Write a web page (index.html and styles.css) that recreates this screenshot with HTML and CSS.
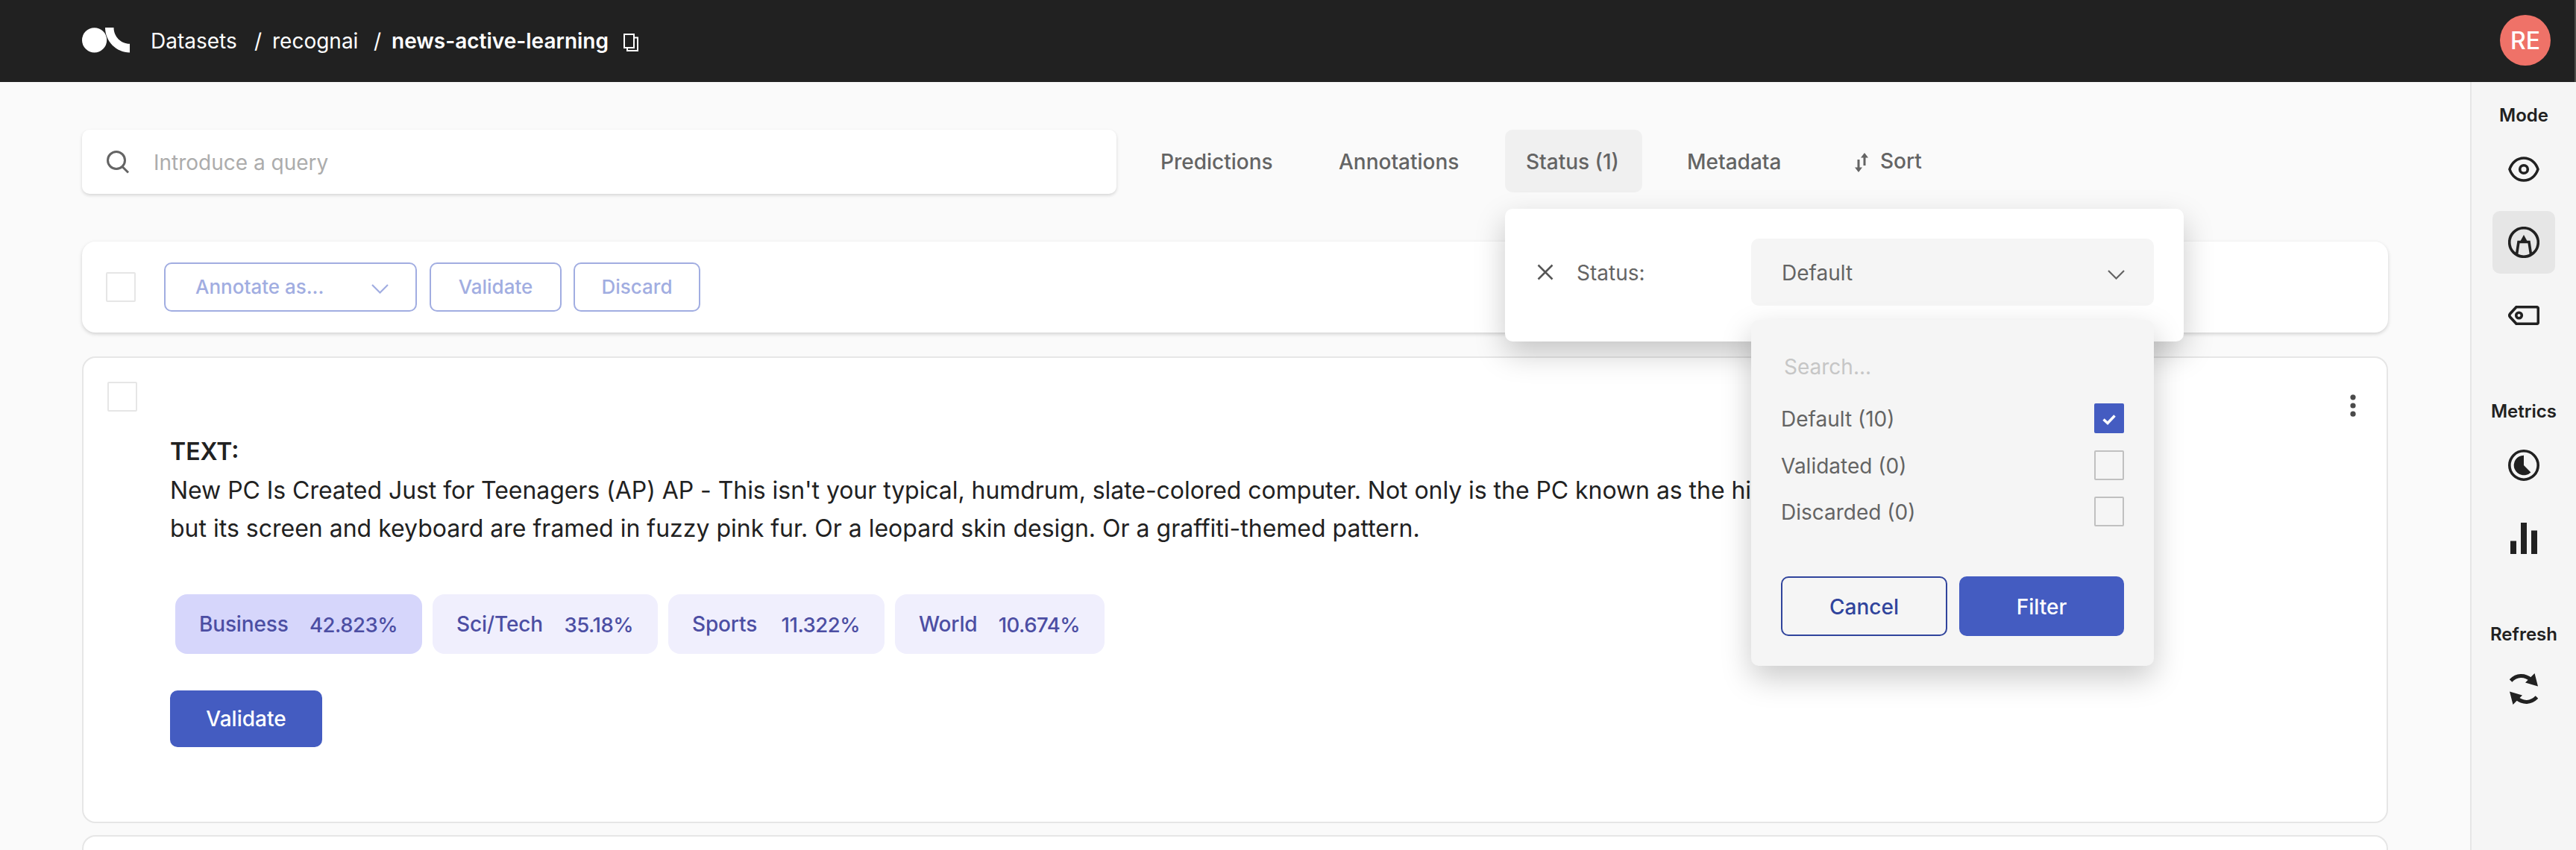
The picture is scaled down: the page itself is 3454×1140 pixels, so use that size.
FILE: index.html
```html
<!DOCTYPE html>
<html lang="en">
<head>
<meta charset="utf-8">
<title>news-active-learning</title>
<link rel="stylesheet" href="styles.css">
</head>
<body>
<header class="topbar">
  <svg class="logo" width="64" height="34" viewBox="0 0 64 34"><circle cx="16.600" cy="16.800" r="16.600"/><path d="M31 0H42.500C42.500 12 52 21.800 64 21.800V33.500C46 33.500 31 18.500 31 0Z"/></svg>
  <nav class="crumbs">
    <span class="crumb crumb-root">Datasets</span><span class="slash slash-one">/</span>
    <span class="crumb crumb-owner">recognai</span><span class="slash slash-two">/</span>
    <span class="crumb crumb-name">news-active-learning</span>
  </nav>
  <svg class="copy" width="20" height="24" viewBox="0 0 20 24"><path d="M1 1H14V19H1ZM14 5.500H19V23H5V19"/></svg>
  <div class="avatar">RE</div>
</header>
<div class="body">
  <main class="main">
    <div class="filters">
      <div class="search">
        <svg width="31" height="31" viewBox="0 0 31 31"><circle cx="13" cy="13" r="11.500"/><path d="M21 21.500L29 29.500"/></svg>
        <span>Introduce a query</span>
      </div>
      <div class="tabs">
        <span class="tab tab-predictions">Predictions</span>
        <span class="tab tab-annotations">Annotations</span>
        <div class="tab tab-status">Status (1)
          <section class="popup">
            <svg class="close" width="22" height="22" viewBox="0 0 22 22"><path d="M1.500 1.500L20.500 20.500M20.500 1.500L1.500 20.500"/></svg>
            <span class="popup-label">Status:</span>
            <div class="picker">
              <span>Default</span>
              <svg class="chevron" width="23" height="13" viewBox="0 0 23 13"><path d="M1 1L11.500 11.500L22 1"/></svg>
              <div class="dropdown">
                <div class="dd-search">Search...</div>
                <div class="option"><span>Default (10)</span><i class="box checked"><svg width="18" height="14" viewBox="0 0 18 14"><path d="M1.500 6.500L7 11.500L16.500 1.500"/></svg></i></div>
                <div class="option"><span>Validated (0)</span><i class="box"></i></div>
                <div class="option"><span>Discarded (0)</span><i class="box"></i></div>
                <div class="dd-actions"><button class="btn cancel">Cancel</button><button class="btn filter">Filter</button></div>
              </div>
            </div>
          </section>
        </div>
        <span class="tab tab-metadata">Metadata</span>
        <span class="tab tab-sort"><svg width="18" height="26" viewBox="0 0 18 26"><path class="line" d="M5 9V21M13 17V5"/><path d="M0 19.500H10L5 26ZM8 6.500H18L13 0Z"/></svg>Sort</span>
      </div>
    </div>
    <div class="bulk">
      <i class="check"></i>
      <button class="outline annotate"><span>Annotate as...</span><svg class="chevron" width="23" height="13" viewBox="0 0 23 13"><path d="M1 1L11.500 11.500L22 1"/></svg></button>
      <button class="outline bulk-validate">Validate</button>
      <button class="outline bulk-discard">Discard</button>
    </div>
    <article class="record">
      <i class="check"></i>
      <div class="record-body">
        <h2>TEXT:</h2>
        <p><span class="line-one">New PC Is Created Just for Teenagers (AP) AP - This isn't your typical, humdrum, slate-colored computer. Not only is the PC known as the hip-e,</span><br><span class="line-two">but its screen and keyboard are framed in fuzzy pink fur. Or a leopard skin design. Or a graffiti-themed pattern.</span></p>
        <div class="labels">
          <div class="label top w1"><span>Business</span><b>42.823%</b></div>
          <div class="label w2"><span>Sci/Tech</span><b>35.18%</b></div>
          <div class="label w3"><span>Sports</span><b>11.322%</b></div>
          <div class="label w4"><span>World</span><b>10.674%</b></div>
        </div>
        <button class="btn validate">Validate</button>
      </div>
      <svg class="more" width="8" height="30" viewBox="0 0 8 30"><circle cx="4" cy="3.800" r="3.600"/><circle cx="4" cy="15" r="3.600"/><circle cx="4" cy="26.200" r="3.600"/></svg>
    </article>
    <article class="record next"></article>
  </main>
  <aside class="side">
    <h3>Mode</h3>
    <div class="tool"><svg width="42" height="34" viewBox="0 0 42 34"><path d="M2 17C5 8 12 2 21 2S37 8 40 17C37 26 30 32 21 32S5 26 2 17Z"/><circle cx="21" cy="17" r="5.300"/></svg></div>
    <div class="tool active"><svg width="42" height="42" viewBox="0 0 42 42"><circle cx="21" cy="21" r="19.300"/><path d="M11.500 37L14 20.500H28L30.500 37"/><path class="solid" d="M21 11L26.500 21H15.500Z"/></svg></div>
    <div class="tool"><svg width="42" height="26" viewBox="0 0 42 26"><path d="M11 1.700H38Q40.300 1.700 40.300 4V22Q40.300 24.300 38 24.300H11L2.500 15Q1 13 2.500 11Z"/><circle cx="14.500" cy="13" r="3.800"/></svg></div>
    <h3 class="metrics">Metrics</h3>
    <div class="tool"><svg width="42" height="42" viewBox="0 0 42 42"><circle cx="21" cy="21" r="19.200"/><path class="solid" d="M21 21V7.700A13.300 13.300 0 1 0 30.400 30.400Z"/></svg></div>
    <div class="tool"><svg width="36" height="42" viewBox="0 0 36 42"><path class="solid" d="M0 24.500H8V42H0ZM14 0H22V42H14ZM28 10.500H36V42H28Z"/></svg></div>
    <h3 class="refresh">Refresh</h3>
    <div class="tool"><svg class="sync" width="38" height="42" viewBox="0 0 38 42"><path d="M1.500 10C9.500 1.800 20 1.500 29 9M36.500 32C28.500 40.200 18 40.500 9 33"/><path class="solid" d="M33.500 0L38 17.500L21 12.500ZM4.500 42L0 24.500L17 29.500Z"/></svg></div>
  </aside>
</div>
</body>
</html>
```
FILE: styles.css
```css
* { box-sizing: border-box; }
body { margin: 0; width: 3454px; height: 1140px; overflow: hidden; background: #fafafa; color: #212121; font: 400 26px/32px Inter, "Liberation Sans", sans-serif; }
button { font: inherit; padding: 0; background: none; cursor: pointer; }
svg { flex: none; fill: none; }
i { flex: none; display: block; }

.topbar { display: flex; align-items: center; height: 110px; padding: 0 32px 2px 110px; background: #212121; border-right: 2px solid #4d4d4a; color: #fff; font-size: 28px; }
.logo { fill: #fff; }
.crumbs { display: flex; margin: 2px 0 0 28px; white-space: nowrap; }
.crumb-root { width: 139px; }
.slash { width: 24px; }
.crumb-owner { width: 136px; }
.crumb-name { width: 311px; font-weight: 600; }
.copy { margin-top: 5px; stroke: #fff; stroke-width: 2; }
.avatar { margin-left: auto; width: 68px; height: 68px; border-radius: 50%; background: #ef7268; text-align: center; font-size: 32px; line-height: 69px; font-weight: 500; }

.body { display: flex; height: 1030px; }
.main { flex: 1; padding: 64px 110px 0; }
.filters { display: flex; height: 86px; color: #646464; font-size: 28px; }
.search { display: flex; align-items: center; gap: 32px; width: 1387px; padding-left: 33px; border-radius: 10px; background: #fff; box-shadow: 0 2px 4px rgba(0,0,0,.15); color: #acacac; }
.search svg { stroke: #646464; stroke-width: 3; }
.search span { padding-top: 2px; }
.tabs { display: flex; height: 84px; line-height: 87px; font-weight: 500; font-size: 28px; white-space: nowrap; }
.tab-predictions { width: 239px; margin-left: 59px; }
.tab-annotations { width: 223px; }
.tab-status { position: relative; width: 184px; padding-left: 28px; border-radius: 10px; background: #f0f0f0; }
.tab-metadata { margin-left: 60px; width: 225px; }
.tab-sort { display: flex; align-items: center; gap: 16px; }
.tab-sort svg { fill: #646464; margin-top: 3px; }
.tab-sort .line { stroke: #646464; stroke-width: 3; }

.popup { position: absolute; z-index: 2; left: 0; top: 106px; width: 910px; height: 178px; padding: 40px 40px 0 43px; display: flex; border-radius: 10px; background: #fff; box-shadow: 0 16px 40px rgba(0,0,0,.21); font-size: 28px; font-weight: 400; line-height: 92px; }
.close { margin-top: 34px; stroke: #565656; stroke-width: 2.5; }
.popup-label { margin-left: 31px; }
.picker { position: relative; display: flex; justify-content: space-between; margin-left: auto; width: 540px; height: 90px; padding: 0 39px 0 41px; border-radius: 10px; background: #f5f5f5; }
.chevron { stroke: currentColor; stroke-width: 2.2; }
.picker .chevron { margin-top: 42px; }
.dropdown { position: absolute; left: 0; top: 109px; width: 540px; height: 464px; padding: 47px 40px 40px; border-radius: 10px; background: #f5f5f5; box-shadow: 0 16px 40px rgba(0,0,0,.21); line-height: 32px; }
.dd-search { height: 65px; padding-left: 4px; color: #c6c6c6; }
.option { display: flex; justify-content: space-between; height: 62.500px; }
.option span { padding-top: 5px; }
.box { width: 40px; height: 40px; border: 2px solid #c0c0c0; border-radius: 2px; }
.box.checked { display: grid; place-items: center; border: 0; background: #445cc1; }
.box svg { stroke: #fff; stroke-width: 3.500; margin-top: 4px; }
.btn { border: 0; border-radius: 10px; background: #445cc1; color: #fff; font-size: 28px; font-weight: 500; }
.dd-actions { display: flex; gap: 16px; height: 80px; margin-top: 44.500px; }
.cancel { width: 223px; border: 2px solid #30449c; background: none; color: #30449c; }
.filter { width: 221px; }
.dd-actions .btn { padding-top: 2px; }

.bulk { display: flex; align-items: center; height: 122px; margin-top: 64px; padding-left: 32px; border-radius: 18px; background: #fff; box-shadow: 0 2px 5px rgba(0,0,0,.17); }
.check { width: 40px; height: 40px; border: 2px solid #e6e6e6; border-radius: 2px; }
.outline { height: 66px; border: 2px solid #a1ade1; border-radius: 10px; color: #a1ade1; font-weight: 500; font-size: 26px; }
.annotate { display: flex; align-items: center; justify-content: space-between; width: 339px; margin: 0 17px 0 38px; padding: 0 36px 0 40px; }
.annotate svg { margin-top: 5px; }
.bulk-validate { width: 177px; margin-right: 16px; }
.bulk-discard { width: 170px; }

.record { display: flex; height: 626px; margin-top: 32px; padding: 32px 41px 0 32px; border: 2px solid #e6e6e6; border-radius: 18px; background: #fff; }
.record-body { flex: 1; padding: 68px 0 0 44px; }
.record h2 { margin: 0; font-size: 32px; line-height: 51.500px; font-weight: 600; }
.record p { margin: 0; font-size: 32px; line-height: 51.500px; white-space: nowrap; }
.line-one { letter-spacing: -0.055px; }
.labels { display: flex; margin: 62.500px 0 49px 7px; }
.label { display: flex; justify-content: space-between; align-items: center; height: 80px; padding: 0 33px 0 32px; border-radius: 16px; background: #f0effd; color: #4c4ea3; font-size: 28px; font-weight: 500; letter-spacing: -0.15px; }
.label b { font-weight: 450; font-size: 27.500px; letter-spacing: -0.5px; padding-top: 2px; }
.label.top { background: #d6d6fb; }
.w1 { width: 331px; margin-right: 14px; }
.w2 { width: 302px; margin-right: 14px; }
.w3 { width: 290px; margin-right: 14px; }
.w4 { width: 281px; }
.validate { width: 204px; height: 76px; }
.more { margin-top: 17px; fill: #4a4a4a; }
.next { height: 20px; margin-top: 16px; padding: 0; border-bottom: 0; border-radius: 18px 18px 0 0; }

.side { flex: none; display: flex; flex-direction: column; align-items: center; width: 142px; padding-top: 28px; border-left: 2px solid #e6e6e6; background: #f5f5f5; }
.side h3 { margin: 0 0 14px; height: 33px; font-size: 24px; font-weight: 600; line-height: 33px; }
.tool { display: grid; place-items: center; width: 84px; height: 84px; margin-bottom: 14px; border-radius: 10px; }
.tool.active { background: #e6e6e6; }
.tool svg { stroke: #212121; stroke-width: 3.600; }
.tool .sync { stroke-width: 5; }
.tool .solid { fill: #212121; stroke: none; }
.side .metrics { margin-top: 56px; }
.side .refresh { margin: 56px 0 15px; }
```
